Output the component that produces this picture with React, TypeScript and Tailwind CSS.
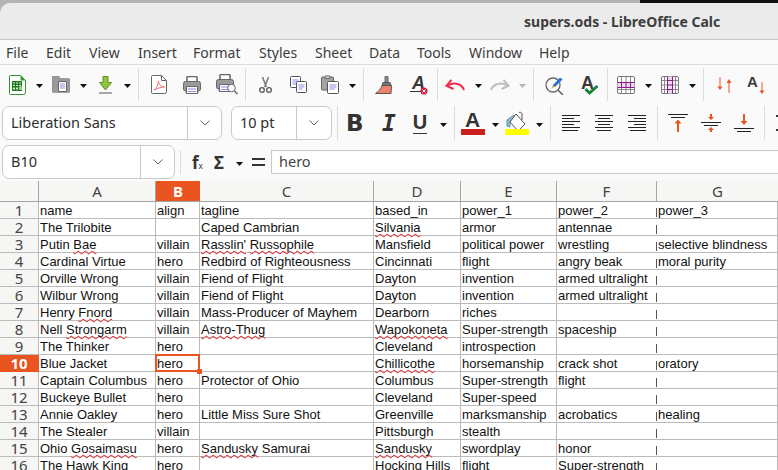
const ui = { fontFamily: '"Noto Sans", sans-serif' };

const misspelled = ["Bae", "Rasslin", "Russophile", "Silvania", "Fnord", "Strongarm", "Astro-Thug", "Wapokoneta", "Chillicothe", "Gosaimasu", "Sandusky"];

const rows = [
  ["name", "align", "tagline", "based_in", "power_1", "power_2", "power_3"],
  ["The Trilobite", "", "Caped Cambrian", "Silvania", "armor", "antennae", ""],
  ["Putin Bae", "villain", "Rasslin' Russophile", "Mansfield", "political power", "wrestling", "selective blindness"],
  ["Cardinal Virtue", "hero", "Redbird of Righteousness", "Cincinnati", "flight", "angry beak", "moral purity"],
  ["Orville Wrong", "villain", "Fiend of Flight", "Dayton", "invention", "armed ultralight", ""],
  ["Wilbur Wrong", "villain", "Fiend of Flight", "Dayton", "invention", "armed ultralight", ""],
  ["Henry Fnord", "villain", "Mass-Producer of Mayhem", "Dearborn", "riches", "", ""],
  ["Nell Strongarm", "villain", "Astro-Thug", "Wapokoneta", "Super-strength", "spaceship", ""],
  ["The Thinker", "hero", "", "Cleveland", "introspection", "", ""],
  ["Blue Jacket", "hero", "", "Chillicothe", "horsemanship", "crack shot", "oratory"],
  ["Captain Columbus", "hero", "Protector of Ohio", "Columbus", "Super-strength", "flight", ""],
  ["Buckeye Bullet", "hero", "", "Cleveland", "Super-speed", "", ""],
  ["Annie Oakley", "hero", "Little Miss Sure Shot", "Greenville", "marksmanship", "acrobatics", "healing"],
  ["The Stealer", "villain", "", "Pittsburgh", "stealth", "", ""],
  ["Ohio Gosaimasu", "hero", "Sandusky Samurai", "Sandusky", "swordplay", "honor", ""],
  ["The Hawk King", "hero", "", "Hocking Hills", "flight", "Super-strength", ""],
];

const columns = [
  { name: "A", width: "w-[117px]" },
  { name: "B", width: "w-[44px]" },
  { name: "C", width: "w-[174px]" },
  { name: "D", width: "w-[87px]" },
  { name: "E", width: "w-[96px]" },
  { name: "F", width: "w-[100px]" },
  { name: "G", width: "flex-1" },
];

function Caret({ className = "", gray = false }: { className?: string; gray?: boolean }) {
  return (
    <svg width="7" height="4" viewBox="0 0 7 4" className={`shrink-0 mt-[3px] ${className}`}>
      <path d="M0 0h7L3.5 4z" fill={gray ? "#b5b5b5" : "#111"} />
    </svg>
  );
}

function Sep({ className = "" }: { className?: string }) {
  return <div className={`w-px self-stretch bg-[#dcdcdc] shrink-0 ${className}`} />;
}

function Chevron() {
  return (
    <svg width="10" height="6" viewBox="0 0 10 6" fill="none" stroke="#666" strokeWidth="1">
      <path d="M.5.5 5 5 9.5.5" />
    </svg>
  );
}

function Combo({ text, box, split }: { text: string; box: string; split: string }) {
  return (
    <div className={`h-[34px] flex bg-white border border-[#c9c9c9] rounded-[7px] text-[14.5px] text-[#2d2d2d] shrink-0 ${box}`} style={ui}>
      <div className={`flex items-center pl-[8px] border-r border-[#c9c9c9] ${split}`}>{text}</div>
      <div className="flex-1 flex items-center justify-center"><Chevron /></div>
    </div>
  );
}

function NewCalc() {
  return (
    <svg width="17" height="20" viewBox="0 0 17 20" className="shrink-0 ml-[9px]">
      <path d="M1.500.5h10l5 5v12a2 2 0 0 1-2 2h-13a1 1 0 0 1-1-1v-17a1 1 0 0 1 1-1z" fill="#fff" stroke="#2f8f2f" />
      <path d="M11.500.5l5 5h-5z" fill="#3c9a33" />
      <path d="M3 6h10v10H3z" fill="#1d7a1d" />
      <path d="M4 7.500h2v1H4zM7 7.500h2v1H7zM10 7.500h2v1h-2zM4 10h2v1H4zM7 10h2v1H7zM10 10h2v1h-2zM4 12.500h2v2H4zM7 12.500h2v2H7z" fill="#d8f0d0" />
      <path d="M10 15v-3l1.500-1.500L13 12v3z" fill="#8fd08a" />
    </svg>
  );
}

function OpenIcon() {
  return (
    <svg width="18" height="17" viewBox="0 0 18 17" className="shrink-0 ml-[9px]">
      <path d="M1.500 0h5l2 2.500h8a1.500 1.500 0 0 1 1.500 1.500v11a1.500 1.500 0 0 1-1.500 1.500h-15A1.500 1.500 0 0 1 0 15V1.500A1.500 1.500 0 0 1 1.500 0z" fill="#9a9a9a" stroke="#777" strokeWidth=".5" />
      <path d="M6.500 5.500h8v10h-8z" fill="#fff" stroke="#666" />
      <path d="M8 8h5M8 10h5M8 12h5" stroke="#8d8de6" />
    </svg>
  );
}

function SaveIcon() {
  return (
    <svg width="13" height="18" viewBox="0 0 13 18" className="shrink-0 ml-[12px]">
      <path d="M4 .5h5v6h3.500L6.500 14 .5 6.500H4z" fill="#8fc43c" stroke="#5f8f20" />
      <path d="M0 17h13" stroke="#555" />
    </svg>
  );
}

function PdfIcon() {
  return (
    <svg width="16" height="19" viewBox="0 0 16 19" fill="none" className="shrink-0 ml-[12px]">
      <path d="M1.500.5h9l5 5v11a2 2 0 0 1-2 2h-12a1 1 0 0 1-1-1v-16a1 1 0 0 1 1-1z" fill="#fff" stroke="#666" />
      <path d="M10.500.5v5h5" stroke="#666" />
      <path d="M3 15c2-1 4-5 4.500-9 .5 4 3 6 6 6-3 0-6 1-10.500 3z" stroke="#ee6d75" />
    </svg>
  );
}

function PrintBody() {
  return (
    <>
      <path d="M4 6V1.500A1 1 0 0 1 5 .5h8a1 1 0 0 1 1 1V6" fill="#fff" stroke="#666" strokeWidth="1.500" />
      <path d="M2.500 5.500h13a2 2 0 0 1 2 2v6a1 1 0 0 1-1 1H15v2.500H3V14.500H1.500a1 1 0 0 1-1-1v-6a2 2 0 0 1 2-2z" fill="#9a9a9a" stroke="#666" />
      <path d="M3.500 10.500h11v7h-11z" fill="#fff" stroke="#666" />
      <path d="M5 13h8M5 15.500h8" stroke="#8d8de6" />
    </>
  );
}

function PrintIcon() {
  return (
    <svg width="18" height="18" viewBox="0 0 18 18" className="shrink-0 ml-[16px]">
      <PrintBody />
    </svg>
  );
}

function PreviewIcon() {
  return (
    <svg width="22" height="21" viewBox="0 0 22 21" className="shrink-0 ml-[15px]">
      <PrintBody />
      <circle cx="15.500" cy="14" r="3.800" fill="#fff" stroke="#666" />
      <path d="M18.500 17l3 3" stroke="#666" strokeWidth="1.500" />
    </svg>
  );
}

function CutIcon() {
  return (
    <svg width="13" height="16" viewBox="0 0 13 16" fill="none" stroke="#555" className="shrink-0 ml-[13px]">
      <path d="M3.500 0l3.800 10M9.500 0L5.700 10" strokeWidth="1.500" stroke="#777" />
      <circle cx="3" cy="13" r="2.300" strokeWidth="1.300" />
      <circle cx="10" cy="13" r="2.300" strokeWidth="1.300" />
    </svg>
  );
}

function Sheet({ x, y }: { x: number; y: number }) {
  return (
    <g transform={`translate(${x} ${y})`}>
      <rect x=".5" y=".5" width="10" height="11" rx="1" fill="#fff" stroke="#555" />
      <path d="M2.500 4h6M2.500 6h6M2.500 8h4" stroke="#8d8de6" />
    </g>
  );
}

function CopyIcon() {
  return (
    <svg width="17" height="17" viewBox="0 0 17 17" className="shrink-0 ml-[18px]">
      <Sheet x={0} y={0} />
      <Sheet x={6} y={5} />
    </svg>
  );
}

function PasteIcon() {
  return (
    <svg width="18" height="19" viewBox="0 0 18 19" className="shrink-0 ml-[14px]">
      <path d="M1.500 2h10a1 1 0 0 1 1 1v11a1 1 0 0 1-1 1h-10a1 1 0 0 1-1-1V3a1 1 0 0 1 1-1z" fill="#a5a5a5" stroke="#666" />
      <path d="M4 1h5v2.500H4z" fill="#ddd" stroke="#666" />
      <rect x="6.500" y="6.500" width="11" height="12" rx="1" fill="#fff" stroke="#555" />
      <path d="M8.500 10h7M8.500 12h7M8.500 14h5" stroke="#8d8de6" />
    </svg>
  );
}

function BrushIcon() {
  return (
    <svg width="17" height="18" viewBox="0 0 17 18" className="shrink-0 ml-[11px]">
      <path d="M10 .5h3v6h-3z" fill="#8a8a8a" stroke="#666" />
      <path d="M8 6.500h7l1 3H7z" fill="#777" stroke="#555" />
      <path d="M7 9.500h9.500l-.5 8H.5C4 15 6 13 7 9.500z" fill="#f3806d" stroke="#555" />
    </svg>
  );
}

function ClearAIcon() {
  return (
    <svg width="18" height="20" viewBox="0 0 18 20" className="shrink-0 ml-[18px] overflow-visible">
      <text x="2" y="14" fontSize="18" fontWeight="700" fontStyle="italic" fill="#3a3a3a" fontFamily="Liberation Sans, sans-serif">A</text>
      <path d="M0 16.500h14" stroke="#333" />
      <circle cx="14" cy="16" r="3.500" fill="#d61f3d" />
      <path d="M12.500 14.500l3 3m0-3l-3 3" stroke="#fff" />
    </svg>
  );
}

function UndoIcon({ flip = false }: { flip?: boolean }) {
  return (
    <svg width="20" height="12" viewBox="0 0 20 12" fill="none" className={`shrink-0 ${flip ? "ml-[8px] -scale-x-100" : "ml-[7px]"}`} stroke={flip ? "#bdbdbd" : "#ef2b4d"} strokeWidth="2">
      <path d="M19 11C17 5 9 2.500 3 6.500" />
      <path d="M6.500 .8 1.500 6.800 8.500 10" />
    </svg>
  );
}

function FindIcon() {
  return (
    <svg width="20" height="20" viewBox="0 0 20 20" fill="none" className="shrink-0 ml-[11px]">
      <circle cx="8" cy="10" r="7" stroke="#666" strokeWidth="1.300" />
      <path d="M13 15l5 5" stroke="#666" strokeWidth="1.600" />
      <path d="M7.500 10.500 15 2.500l2.500 2L10 12z" fill="#2a6fd6" />
      <path d="M7.500 10.500 10 12l-3.500 1.500z" fill="#e9b56f" />
    </svg>
  );
}

function SpellIcon() {
  return (
    <svg width="18" height="20" viewBox="0 0 18 20" fill="none" className="shrink-0 ml-[16px] overflow-visible">
      <text x="0" y="14" fontSize="18" fontWeight="700" fill="#3a3a3a" fontFamily="Liberation Sans, sans-serif">A</text>
      <path d="M4.500 14l4 4 8-7" stroke="#14833b" strokeWidth="2.800" />
    </svg>
  );
}

function TableIcon({ highlight, className }: { highlight: "row" | "col"; className: string }) {
  return (
    <svg width="18" height="18" viewBox="0 0 18 18" fill="none" className={`shrink-0 ${className}`}>
      <rect x=".5" y=".5" width="17" height="17" rx="1.500" fill="#fff" stroke="#777" />
      {highlight === "row" ? (
        <>
          <path d="M4.500 1v16M9 1v16M13.500 1v16M1 13.500h16" stroke="#888" />
          <path d="M.5 6.500h17v5H.5z" fill="#edd9ed" />
          <path d="M.5 6.500h17M.5 11.500h17M4.500 6.500v5M9 6.500v5M13.500 6.500v5" stroke="#8a1c8a" />
        </>
      ) : (
        <>
          <path d="M1 4.500h16M1 9h16M1 13.500h16M3.500 1v16M14.500 1v16" stroke="#888" />
          <path d="M6.500 .5h5v17h-5z" fill="#edd9ed" />
          <path d="M6.500 .5v17M11.500 .5v17M6.500 4.500h5M6.500 9h5M6.500 13.500h5" stroke="#8a1c8a" />
        </>
      )}
    </svg>
  );
}

function SortIcon() {
  return (
    <svg width="15" height="16" viewBox="0 0 15 16" fill="none" className="shrink-0 ml-[13px]">
      <path d="M3 0v10" stroke="#e95420" />
      <path d="M.5 9.500h5L3 13z" fill="#e95420" />
      <path d="M12 16V5" stroke="#e95420" />
      <path d="M9.500 6h5L12 2z" fill="#e95420" />
    </svg>
  );
}

function SortAIcon() {
  return (
    <svg width="18" height="20" viewBox="0 0 18 20" fill="none" className="shrink-0 ml-[15px] overflow-visible">
      <text x="0" y="12" fontSize="15" fontWeight="700" fill="#3a3a3a" fontFamily="Liberation Sans, sans-serif">A</text>
      <path d="M15 7v9" stroke="#e95420" />
      <path d="M12.500 15.500h5L15 19z" fill="#e95420" />
    </svg>
  );
}

function FillIcon() {
  return (
    <svg width="24" height="24" viewBox="0 0 24 24" className="shrink-0 ml-[6px]">
      <path d="M2 9l7-5 1 2-5 4v6l-3-1z" fill="#8fbcd4" stroke="#5c8fa8" />
      <path d="M11 3 20 13l-7 7-8-9z" fill="#fff" stroke="#555" />
      <path d="M14 1.500a2 2 0 0 1 3 1.500v6" fill="none" stroke="#555" />
      <rect x="0" y="18" width="24" height="6" fill="#ffff00" />
    </svg>
  );
}

function FontColorIcon() {
  return (
    <div className="relative w-[24px] h-[24px] shrink-0 ml-[6px]">
      <span className="absolute left-[4px] -top-[2px] text-[21px] leading-[22px] font-bold text-[#333]" style={{ fontFamily: '"Liberation Sans"' }}>A</span>
      <div className="absolute bottom-0 w-full h-[6px] bg-[#c9211e]" />
    </div>
  );
}

function AlignIcon({ kind, className }: { kind: "l" | "c" | "r"; className: string }) {
  const lines = kind === "l"
    ? "M0 .5h18M0 3.500h12M0 6.500h18M0 9.500h12M0 12.500h18M0 15.500h16"
    : kind === "c"
      ? "M0 .5h18M3 3.500h12M0 6.500h18M3 9.500h12M0 12.500h18M2 15.500h14"
      : "M0 .5h18M6 3.500h12M0 6.500h18M6 9.500h12M0 12.500h18M2 15.500h16";
  return (
    <svg width="18" height="16" viewBox="0 0 18 16" className={`shrink-0 ${className}`}>
      <path d={lines} stroke="#222" />
    </svg>
  );
}

function VAlignIcon({ kind, className }: { kind: "t" | "m" | "b"; className: string }) {
  return (
    <svg width="20" height="18" viewBox="0 0 20 18" fill="none" className={`shrink-0 ${className}`}>
      {kind === "t" && (
        <>
          <path d="M0 .5h20M3 3.500h14" stroke="#222" />
          <path d="M10 8v10" stroke="#e95420" strokeWidth="2" />
          <path d="M6.500 9.500h7L10 5.500z" fill="#e95420" />
        </>
      )}
      {kind === "m" && (
        <>
          <path d="M0 8.500h20M3 11.500h14" stroke="#222" />
          <path d="M10 0v3" stroke="#e95420" strokeWidth="2" />
          <path d="M7 3h6l-3 3zM7 16h6l-3-3z" fill="#e95420" />
          <path d="M10 15v3" stroke="#e95420" strokeWidth="2" />
        </>
      )}
      {kind === "b" && (
        <>
          <path d="M0 14.500h20M3 17.500h14" stroke="#222" />
          <path d="M10 0v8" stroke="#e95420" strokeWidth="2" />
          <path d="M6.500 7h7L10 11z" fill="#e95420" />
        </>
      )}
    </svg>
  );
}

function Cell({ text }: { text: string }) {
  const parts = text.split(/(\s+)/);
  return (
    <span className="whitespace-nowrap">
      {parts.map((p, i) =>
        misspelled.includes(p.replace(/'$/, "")) ? (
          <span key={i} className="underline decoration-wavy decoration-[#e8101a] decoration-1 underline-offset-[1px] [text-decoration-skip-ink:none]">{p}</span>
        ) : (
          <span key={i}>{p}</span>
        )
      )}
    </span>
  );
}

export default function App() {
  return (
    <div className="w-[778px] h-[470px] overflow-hidden bg-[#b4b4b4] flex flex-col relative">
      <div className="absolute right-0 top-0 w-[138px] h-[3px] bg-[#111]" />
      <div className="h-[3px] shrink-0" />

      <div className="h-[36px] shrink-0 bg-[#ebebeb] rounded-tl-[10px] flex items-center pl-[524px] text-[14px] font-bold text-[#3d3d3d] relative" style={ui}>
        supers.ods - LibreOffice Calc
      </div>

      <div className="flex-1 flex flex-col bg-[#fafafa] border-t border-[#c6c6c6] min-h-0">
        <div className="h-[24px] shrink-0 flex items-center pl-[6px] text-[14px] text-[#3d3d3d] border-b border-[#dedede] box-content" style={ui}>
          <div className="w-[40px]">File</div>
          <div className="w-[43px]">Edit</div>
          <div className="w-[49px]">View</div>
          <div className="w-[55px]">Insert</div>
          <div className="w-[66px]">Format</div>
          <div className="w-[56px]">Styles</div>
          <div className="w-[54px]">Sheet</div>
          <div className="w-[48px]">Data</div>
          <div className="w-[52px]">Tools</div>
          <div className="w-[70px]">Window</div>
          <div>Help</div>
        </div>

        <div className="h-[33px] mt-[3px] mb-[5px] shrink-0 flex items-center">
          <NewCalc />
          <Caret className="ml-[10px]" />
          <OpenIcon />
          <Caret className="ml-[10px]" />
          <SaveIcon />
          <Caret className="ml-[12px]" />
          <Sep className="ml-[7px]" />
          <PdfIcon />
          <PrintIcon />
          <PreviewIcon />
          <Sep className="ml-[7px]" />
          <CutIcon />
          <CopyIcon />
          <PasteIcon />
          <Caret className="ml-[10px]" />
          <Sep className="ml-[7px]" />
          <BrushIcon />
          <ClearAIcon />
          <Sep className="ml-[9px]" />
          <UndoIcon />
          <Caret className="ml-[10px]" />
          <UndoIcon flip />
          <Caret className="ml-[9px]" gray />
          <Sep className="ml-[7px]" />
          <FindIcon />
          <SpellIcon />
          <Sep className="ml-[8px]" />
          <TableIcon highlight="row" className="ml-[9px]" />
          <Caret className="ml-[10px]" />
          <TableIcon highlight="col" className="ml-[9px]" />
          <Caret className="ml-[10px]" />
          <Sep className="ml-[7px]" />
          <SortIcon />
          <SortAIcon />
        </div>

        <div className="h-[34px] mb-[5px] shrink-0 flex items-center">
          <Combo text="Liberation Sans" box="w-[220px] ml-[2px]" split="w-[185px]" />
          <Combo text="10 pt" box="w-[101px] ml-[9px]" split="w-[65px]" />
          <Sep className="ml-[5px]" />
          <span className="w-[19px] ml-[8px] text-[23px] leading-none font-bold text-[#333] shrink-0" style={{ fontFamily: '"DejaVu Sans"' }}>B</span>
          <span className="w-[14px] ml-[17px] text-[23px] leading-none font-bold italic text-[#333] shrink-0" style={{ fontFamily: '"DejaVu Sans Mono"' }}>I</span>
          <div className="w-[14px] ml-[17px] shrink-0 flex flex-col items-center">
            <span className="text-[20px] leading-[19px] font-bold text-[#333]" style={{ fontFamily: '"Liberation Sans"' }}>U</span>
            <div className="h-px w-[14px] bg-[#333] mt-[1px]" />
          </div>
          <Caret className="ml-[13px]" />
          <Sep className="ml-[7px]" />
          <FontColorIcon />
          <Caret className="ml-[7px]" />
          <FillIcon />
          <Caret className="ml-[7px]" />
          <Sep className="ml-[7px]" />
          <AlignIcon kind="l" className="ml-[11px]" />
          <AlignIcon kind="c" className="ml-[15px]" />
          <AlignIcon kind="r" className="ml-[15px]" />
          <Sep className="ml-[11px]" />
          <VAlignIcon kind="t" className="ml-[10px]" />
          <VAlignIcon kind="m" className="ml-[13px]" />
          <VAlignIcon kind="b" className="ml-[13px]" />
          <Sep className="ml-[10px]" />
          <div className="ml-[11px] w-[4px] h-[16px] border-y-2 border-[#333] shrink-0" />
        </div>

        <div className="h-[34px] mb-[2px] shrink-0 flex items-center">
          <Combo text="B10" box="w-[173px] ml-[2px]" split="w-[138px]" />
          <Sep className="ml-[5px] my-[5px]" />
          <span className="ml-[11px] w-[12px] text-[#333] font-bold text-[17px] leading-none shrink-0" style={ui}>f<span className="text-[8px] font-normal">x</span></span>
          <span className="ml-[10px] w-[12px] text-[#333] font-bold text-[17px] leading-none shrink-0" style={ui}>Σ</span>
          <Caret className="ml-[10px]" />
          <span className="ml-[9px] w-[13px] h-[8px] border-y-2 border-[#333] shrink-0" />
          <div className="ml-[6px] flex-1 h-[24px] bg-white border-y border-l border-[#c9c9c9] flex items-center pl-[7px] text-[14.5px] text-[#444]" style={ui}>hero</div>
        </div>

        <div className="flex-1 min-h-0 bg-white text-[13px] text-[#111]" style={{ fontFamily: '"Liberation Sans", sans-serif' }}>
          <div className="h-[20px] flex bg-[#f6f6f5] border-b border-[#a5a5a5] box-content text-[15px] text-[#444]" style={ui}>
            <div className="w-[39px] shrink-0 border-r border-[#a5a5a5]" />
            {columns.map((c) =>
              c.name === "B" ? (
                <div key={c.name} className={`${c.width} shrink-0 bg-[#e95420] text-white font-bold text-center leading-[20px]`}>{c.name}</div>
              ) : (
                <div key={c.name} className={`${c.width} ${c.name === "G" ? "" : "shrink-0 border-r border-[#a5a5a5]"} text-center leading-[20px]`}>{c.name}</div>
              )
            )}
          </div>
          {rows.map((row, r) => (
            <div key={r} className="h-[17px] flex">
              <div className={`w-[39px] shrink-0 border-r border-b text-center text-[15px] leading-[17px] ${r === 9 ? "bg-[#e95420] text-white font-bold border-[#e95420]" : "bg-[#f6f6f5] text-[#444] border-[#bbbbbb]"}`} style={ui}>{r + 1}</div>
              {row.map((cell, c) => (
                <div
                  key={c}
                  className={`${columns[c].width} ${c < 6 ? "shrink-0" : ""} ${c === 5 ? "bg-[linear-gradient(#555,#555)] bg-no-repeat bg-[length:1px_9px] bg-[position:right_6px]" : "border-r border-[#bbbbbb]"} border-b border-b-[#bbbbbb] pl-[1px] leading-[17px] relative`}
                >
                  <Cell text={cell} />
                  {r === 9 && c === 1 && (
                    <>
                      <div className="absolute -top-px -bottom-px -left-px -right-px border-2 border-[#e95420] z-10" />
                      <div className="absolute -right-[3px] -bottom-[3px] w-[5px] h-[5px] bg-[#e95420] z-10" />
                    </>
                  )}
                </div>
              ))}
            </div>
          ))}
        </div>
      </div>
    </div>
  );
}
